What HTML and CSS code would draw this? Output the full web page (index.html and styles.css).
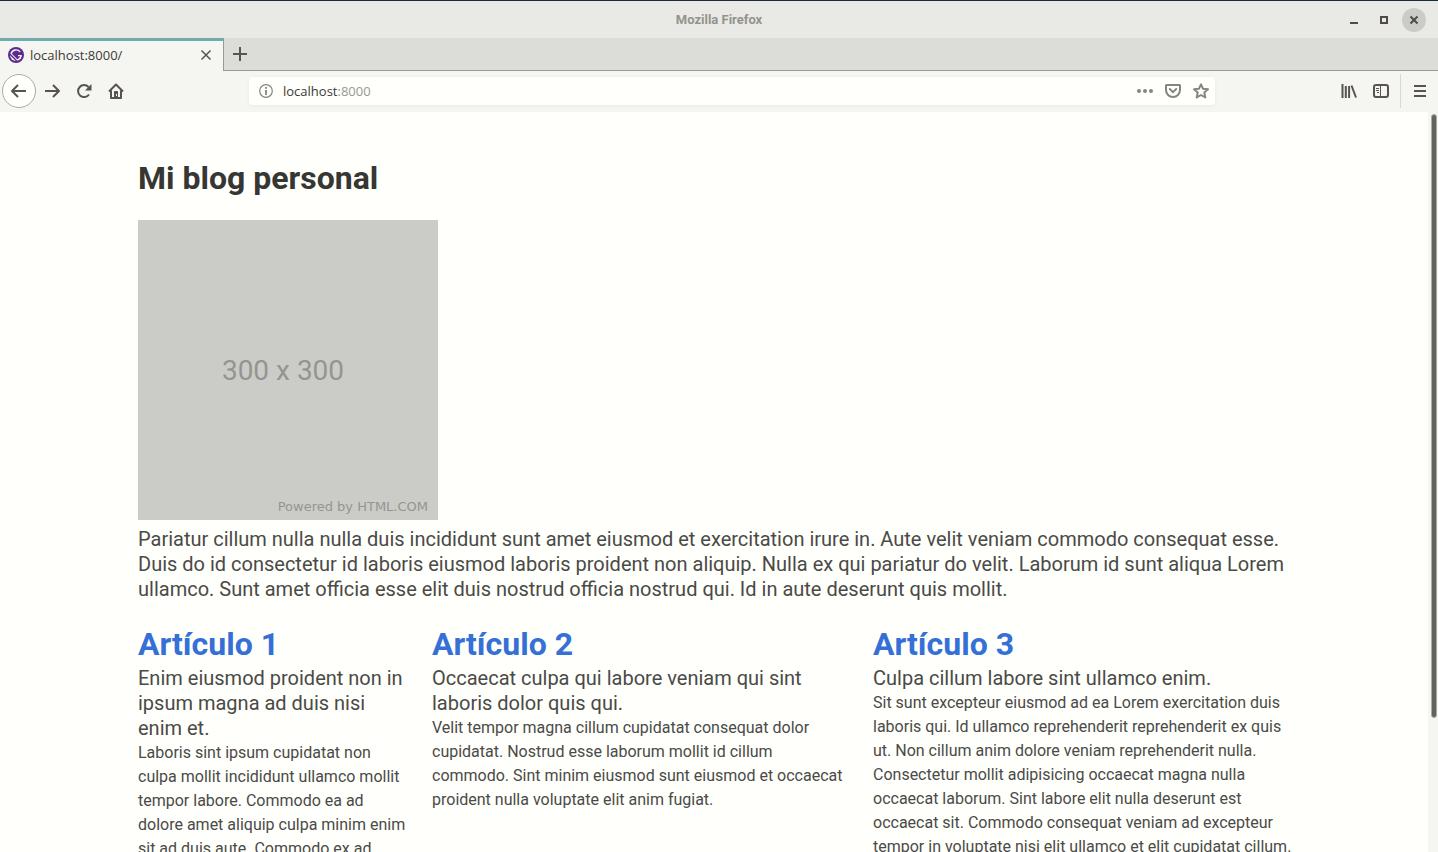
FILE: index.html
```html
<!DOCTYPE html>
<html lang="es">
<head>
<meta charset="utf-8">
<title>Mi blog personal</title>
<link rel="stylesheet" href="styles.css">
</head>
<body>
<header class="titlebar">
  <span class="window-title">Mozilla Firefox</span>
  <div class="window-controls">
    <button class="window-button" aria-label="Minimizar"><svg width="10" height="10"><path d="M1 8h8" stroke="currentColor" stroke-width="2"/></svg></button>
    <button class="window-button" aria-label="Maximizar"><svg width="10" height="10"><rect x="2" y="2" width="6" height="6" fill="none" stroke="currentColor" stroke-width="2"/></svg></button>
    <button class="window-button window-close" aria-label="Cerrar"><svg width="10" height="10"><path d="M1.5 1.500l7 7m0-7l-7 7" stroke="currentColor" stroke-width="2"/></svg></button>
  </div>
</header>
<nav class="tabs" aria-label="Pestañas">
  <div class="tab">
    <svg class="favicon" width="16" height="16" viewBox="0 0 16 16"><circle cx="8" cy="8" r="8" fill="#5d2a8d"/><path d="M2 8.200 7.800 14A6 6 0 0 1 2 8.200Z" fill="#f5f6f2"/><path d="M2.300 6.500 9.500 13.700A6 6 0 0 0 13.800 8H10v1.200h2.200a4.600 4.600 0 0 1-2.900 3L3.800 6.700a4.600 4.600 0 0 1 7.900-1.400l1-.9A6 6 0 0 0 2.300 6.500Z" fill="#f5f6f2"/></svg>
    <span class="tab-title">localhost:8000/</span>
    <button class="tab-close" aria-label="Cerrar pestaña"><svg width="12" height="12"><path d="M1.500 1.500l9 9m0-9l-9 9" stroke="currentColor" stroke-width="1.500"/></svg></button>
  </div>
  <button class="new-tab" aria-label="Nueva pestaña"><svg width="14" height="14"><path d="M7 0v14M0 7h14" stroke="currentColor" stroke-width="2"/></svg></button>
</nav>
<div class="toolbar">
  <div class="nav-buttons">
    <button class="tool back" aria-label="Atrás"><svg width="18" height="16" viewBox="0 0 18 16"><path d="M16 8H2M8 2 2 8l6 6"/></svg></button>
    <button class="tool" aria-label="Adelante"><svg width="18" height="16" viewBox="0 0 18 16"><path d="M2 8h14M10 2l6 6-6 6"/></svg></button>
    <button class="tool" aria-label="Recargar"><svg width="16" height="16" viewBox="0 0 16 16"><path d="M13 11.500A6 6 0 1 1 12.500 4"/><path d="M15.500 1v6.500H9Z" fill="currentColor" stroke="none"/></svg></button>
    <button class="tool" aria-label="Inicio"><svg width="16" height="16" viewBox="0 0 16 16"><path d="M1 8.500 8 1.500l7 7M3 7.500V15h10V7.500"/><path d="M6.500 15V8.500h3V15" fill="currentColor" stroke-width="1"/><path d="M8.500 11v2" stroke="#f5f6f2" stroke-width="1"/></svg></button>
  </div>
  <div class="url-bar">
    <svg class="info" width="14" height="14" viewBox="0 0 14 14"><circle cx="7" cy="7" r="6.300" fill="none" stroke="currentColor" stroke-width="1.200"/><path d="M7 3v1.800M7 6v5" stroke="currentColor" stroke-width="1.800"/></svg>
    <div class="url" role="textbox" aria-label="Dirección">localhost<span class="port">:8000</span></div>
    <button class="action" aria-label="Acciones de página"><svg width="16" height="16"><g fill="currentColor"><circle cx="2" cy="8" r="2"/><circle cx="8" cy="8" r="2"/><circle cx="14" cy="8" r="2"/></g></svg></button>
    <button class="action" aria-label="Guardar en Pocket"><svg width="16" height="16" viewBox="0 0 16 16" class="line"><path d="M1.500 2h13a.5.5 0 0 1 .5.5V7A7 7 0 0 1 1 7V2.500a.5.5 0 0 1 .5-.5Z"/><path d="M4.800 6 8 9.200 11.200 6" stroke-linecap="round"/></svg></button>
    <button class="action" aria-label="Añadir a marcadores"><svg width="16" height="16" viewBox="0 0 16 16" class="line"><path d="M8 1.300 10 5.700 15 6.300 11.300 9.600 12.300 14.500 8 12 3.700 14.500 4.700 9.600 1 6.300 6 5.700Z" stroke-linejoin="round"/></svg></button>
  </div>
  <div class="end-buttons">
    <button class="tool" aria-label="Biblioteca"><svg width="16" height="16" viewBox="0 0 16 16"><path d="M1.500 1v14M4.800 3v12M8.100 3v12M10.500 2.500 15 14.500" stroke-width="2"/></svg></button>
    <button class="tool" aria-label="Barra lateral"><svg width="16" height="16" viewBox="0 0 16 16"><rect x="1" y="2" width="14" height="12" rx="2"/><path d="M7.500 2v12M3 5.500h3M3 7.500h3M4 9.500h2" stroke-width="1"/></svg></button>
    <button class="tool menu" aria-label="Abrir menú"><svg width="12" height="12" viewBox="0 0 12 12"><path d="M0 1h12M0 6h12M0 11h12"/></svg></button>
  </div>
</div>
<div class="viewport">
  <main class="page">
    <div class="container">
      <h1 class="title">Mi blog personal</h1>
      <div class="placeholder" role="img" aria-label="300 x 300">
        <span class="placeholder-size">300 x 300</span>
        <span class="placeholder-credit">Powered by HTML.COM</span>
      </div>
      <p class="subtitle intro">Pariatur cillum nulla nulla duis incididunt sunt amet eiusmod et exercitation irure in. Aute velit veniam commodo consequat esse. Duis do id consectetur id laboris eiusmod laboris proident non aliquip. Nulla ex qui pariatur do velit. Laborum id sunt aliqua Lorem ullamco. Sunt amet officia esse elit duis nostrud officia nostrud qui. Id in aute deserunt quis mollit.</p>
      <div class="columns">
        <article class="column">
          <h2 class="article-title"><a href="#articulo-1">Artículo 1</a></h2>
          <p class="subtitle">Enim eiusmod proident non in ipsum magna ad duis nisi enim et.</p>
          <p class="content">Laboris sint ipsum cupidatat non culpa mollit incididunt ullamco mollit tempor labore. Commodo ea ad dolore amet aliquip culpa minim enim sit ad duis aute. Commodo ex ad</p>
        </article>
        <article class="column">
          <h2 class="article-title"><a href="#articulo-2">Artículo 2</a></h2>
          <p class="subtitle">Occaecat culpa qui labore veniam qui sint laboris dolor quis qui.</p>
          <p class="content">Velit tempor magna cillum cupidatat consequat dolor cupidatat. Nostrud esse laborum mollit id cillum commodo. Sint minim eiusmod sunt eiusmod et occaecat proident nulla voluptate elit anim fugiat.</p>
        </article>
        <article class="column">
          <h2 class="article-title"><a href="#articulo-3">Artículo 3</a></h2>
          <p class="subtitle">Culpa cillum labore sint ullamco enim.</p>
          <p class="content">Sit sunt excepteur eiusmod ad ea Lorem exercitation duis laboris qui. Id ullamco reprehenderit reprehenderit ex quis ut. Non cillum anim dolore veniam reprehenderit nulla. Consectetur mollit adipisicing occaecat magna nulla occaecat laborum. Sint labore elit nulla deserunt est occaecat sit. Commodo consequat veniam ad excepteur tempor in voluptate nisi elit ullamco et elit cupidatat cillum.</p>
        </article>
      </div>
    </div>
  </main>
  <div class="scrollbar"><div class="thumb"></div></div>
</div>
</body>
</html>
```
FILE: styles.css
```css
* { box-sizing: border-box; }
body, h1, h2, p { margin: 0; }
body {
  display: flex;
  flex-direction: column;
  height: 100vh;
  overflow: hidden;
  background: #fffffb;
  color: #4a4a48;
  font-family: Roboto, "Liberation Sans", sans-serif;
}
button {
  display: flex;
  align-items: center;
  justify-content: center;
  flex: none;
  padding: 0;
  border: 0;
  background: none;
  color: inherit;
}
a { color: #3570d7; text-decoration: none; }

.titlebar {
  display: grid;
  grid-template-columns: 1fr auto 1fr;
  align-items: center;
  flex: none;
  height: 38px;
  padding: 0 12px;
  border-top: 1px solid #1b2a41;
  background: #e9eae6;
}
.window-title {
  grid-column: 2;
  color: #95928b;
  font-size: 13px;
  font-weight: 700;
}
.window-controls {
  display: flex;
  justify-content: flex-end;
  gap: 6px;
  color: #504b45;
}
.window-button { width: 24px; height: 24px; border-radius: 50%; }
.window-close { background: #cbccc8; }

.tabs {
  display: flex;
  flex: none;
  height: 33px;
  background: #dcddd9;
  color: #58534f;
  box-shadow: inset 0 -1px #999a96;
}
.tab {
  display: flex;
  align-items: center;
  gap: 6px;
  width: 224px;
  padding: 0 11px 2px 8px;
  border-top: 3px solid #70acad;
  border-right: 1px solid #999a96;
  background: #f5f6f2;
}
.tab-title, .url { flex: 1; color: #3c3a37; font-family: "Open Sans", "Noto Sans", sans-serif; font-size: 13px; }
.new-tab { width: 32px; padding-bottom: 1px; }

.toolbar {
  display: flex;
  align-items: center;
  flex: none;
  height: 41px;
  padding: 0 0 2px 2px;
  background: #f5f6f2;
  color: #58534f;
}
.nav-buttons, .end-buttons { display: flex; align-items: center; }
.nav-buttons { flex: 0 0 247px; }
.end-buttons { flex: 0 0 105px; margin-left: 118px; }
.tool { width: 32px; height: 34px; }
.tool svg, .line { fill: none; stroke: currentColor; stroke-width: 2; }
.tool path { stroke-linejoin: round; }
.back {
  width: 34px;
  border: 1px solid #aaaba7;
  border-radius: 50%;
  background: #fffffb;
}
.menu { width: 38px; margin-left: 3px; border-left: 1px solid #d8d9d5; }
.url-bar {
  display: flex;
  align-items: center;
  flex: 1;
  gap: 12px;
  height: 28px;
  padding: 0 6px 0 10px;
  border-radius: 3px;
  background: #fffffb;
  box-shadow: 0 1px 4px #0000000d;
}
.info, .action { color: #858580; }
.info { margin-right: -2px; }
.port { color: #999894; }

.viewport { display: flex; flex: 1; min-height: 0; }
.page { flex: 1; overflow: hidden; padding: 48px 24px 0; }
.container { max-width: 1152px; margin: 0 auto; }
.title {
  margin-bottom: 24px;
  color: #363633;
  font-size: 32px;
  font-weight: 700;
  line-height: 36px;
}
.placeholder {
  display: grid;
  grid-template-rows: 1fr auto 1fr;
  width: 300px;
  height: 300px;
  padding: 6px 10px 6px 0;
  background: #cbccc8;
  color: #949590;
}
.placeholder-size {
  grid-row: 2;
  justify-self: center;
  font-size: 28px;
}
.placeholder-credit {
  grid-row: 3;
  align-self: end;
  justify-self: end;
  font-family: "DejaVu Sans", sans-serif;
  font-size: 13px;
}
.subtitle { font-size: 20px; line-height: 25px; }
.intro { margin: 7px 0 24px; }
.columns {
  display: grid;
  grid-template-columns: 2fr 3fr 3fr;
  margin: 0 -12px;
}
.column { padding: 0 12px; }
.column:last-child { padding-right: 8px; }
.article-title {
  margin-bottom: 4px;
  font-size: 32px;
  font-weight: 700;
  line-height: 36px;
}
.content { font-size: 16px; line-height: 24px; }

.scrollbar { flex: none; width: 10px; padding: 2px 1px 2px 3px; background: #f5f6f2; }
.thumb { height: 82%; border: 1px solid #aaaba7; border-radius: 3px; background: #62625e; }
```
